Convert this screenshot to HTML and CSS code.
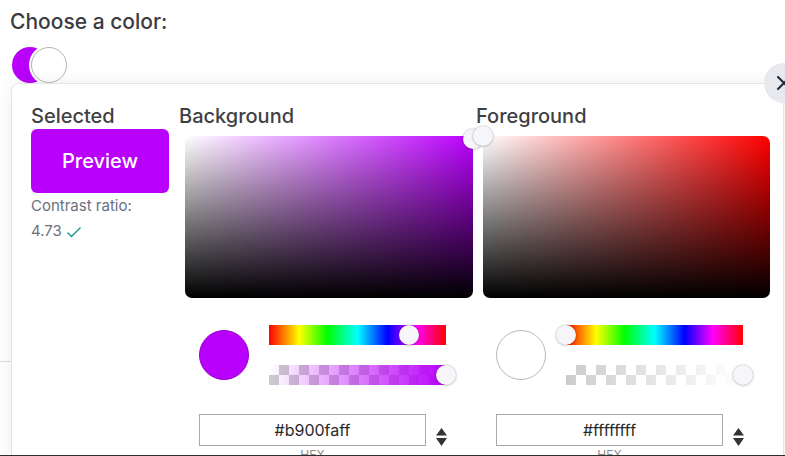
FILE: index.html
```html
<!DOCTYPE html>
<html lang="en">
<head>
<meta charset="utf-8">
<title>Choose a color</title>
<link rel="stylesheet" href="styles.css">
</head>
<body>
<div class="viewport">
  <div class="page">
    <h1 class="title">Choose a color:</h1>
    <div class="swatches">
      <span class="swatch swatch-bg"></span>
      <span class="swatch swatch-fg"></span>
    </div>
    <div class="underlay"></div>
  </div>

  <div class="popover">
    <button class="close" aria-label="Close">
      <svg width="18" height="18" viewBox="0 0 18 18"><path d="M3 3 L15 15 M15 3 L3 15" stroke="#1e293b" stroke-width="2" stroke-linecap="round" fill="none"/></svg>
    </button>
    <div class="cols">
      <div class="col-selected">
        <h2 class="heading">Selected</h2>
        <div class="preview">Preview</div>
        <div class="ratio-label">Contrast ratio:</div>
        <div class="ratio-value">4.73
          <svg class="check" width="16" height="12" viewBox="0 0 16 12"><path d="M1.5 6.5 L5.5 10.5 L14.5 1.5" stroke="#14968c" stroke-width="1.4" fill="none"/></svg>
        </div>
      </div>

      <div class="picker picker-bg">
        <h2 class="heading">Background</h2>
        <div class="sv sv-bg"><span class="handle" style="left:100%;top:2%"></span></div>
        <div class="controls">
          <span class="chip chip-bg"></span>
          <div class="sliders">
            <div class="track hue"><span class="handle" style="left:79%"></span></div>
            <div class="track alpha"><div class="alpha-fill alpha-bg"></div><span class="handle" style="left:100%"></span></div>
          </div>
        </div>
        <div class="hex-row">
          <div class="hex-field">
            <input class="hex" type="text" value="#b900faff">
            <div class="hex-label">HEX</div>
          </div>
          <svg class="arrows" width="11" height="18" viewBox="0 0 11 18"><path d="M5.5 0 L11 7.5 L0 7.5 Z M0 10 L11 10 L5.5 18 Z" fill="#333"/></svg>
        </div>
      </div>

      <div class="picker picker-fg">
        <h2 class="heading">Foreground</h2>
        <div class="sv sv-fg"><span class="handle" style="left:0%;top:0%"></span></div>
        <div class="controls">
          <span class="chip chip-fg"></span>
          <div class="sliders">
            <div class="track hue"><span class="handle" style="left:0%"></span></div>
            <div class="track alpha"><div class="alpha-fill alpha-fg"></div><span class="handle" style="left:100%"></span></div>
          </div>
        </div>
        <div class="hex-row">
          <div class="hex-field">
            <input class="hex" type="text" value="#ffffffff">
            <div class="hex-label">HEX</div>
          </div>
          <svg class="arrows" width="11" height="18" viewBox="0 0 11 18"><path d="M5.5 0 L11 7.5 L0 7.5 Z M0 10 L11 10 L5.5 18 Z" fill="#333"/></svg>
        </div>
      </div>
    </div>
  </div>
</div>
</body>
</html>
```

FILE: styles.css
```css
* { box-sizing: border-box; }

html, body {
  margin: 0;
  padding: 0;
  background: #fff;
  font-family: Inter, "Noto Sans", "Liberation Sans", sans-serif;
}

.viewport {
  position: relative;
  width: 785px;
  height: 456px;
  overflow: hidden;
  border-bottom: 1px solid #2e2e2e;
}

.page {
  padding: 10px 10px 0;
}

.title {
  margin: 0;
  font-size: 21px;
  line-height: 24px;
  font-weight: 500;
  color: #3b3b40;
}

.swatches {
  display: flex;
  margin-top: 13px;
  padding-left: 2px;
  height: 36px;
}

.swatch {
  display: block;
  width: 36px;
  height: 36px;
  border-radius: 50%;
}

.swatch-bg { background: #b900fa; }

.swatch-fg {
  margin-left: -17px;
  background: #fff;
  border: 1px solid #b4b4b4;
  box-shadow: 0 0 0 2px #fff;
}

.underlay {
  height: 279px;
  margin-left: -10px;
  border-bottom: 1px solid #dcdce2;
}

/* Popover */
.popover {
  position: absolute;
  left: 11px;
  top: 83px;
  width: 773px;
  height: 420px;
  background: #fff;
  border: 1px solid #e4e4e9;
  border-radius: 8px;
  box-shadow: 0 0 18px rgba(0, 0, 0, 0.07);
  padding: 20px 0 0 19px;
}

.close {
  position: absolute;
  top: -21px;
  right: -21px;
  width: 40px;
  height: 40px;
  border: 0;
  border-radius: 50%;
  background: #e8e9ee;
  padding: 0;
  display: flex;
  align-items: center;
  justify-content: center;
}

.cols {
  display: flex;
  gap: 10px;
}

.heading {
  margin: 0;
  font-size: 20px;
  line-height: 24px;
  font-weight: 500;
  color: #3f3f46;
}

.col-selected {
  width: 138px;
}

.preview {
  margin-top: 1px;
  height: 64px;
  border-radius: 6px;
  background: #b900fa;
  color: #fff;
  font-size: 20px;
  font-weight: 500;
  display: flex;
  align-items: center;
  justify-content: center;
}

.ratio-label {
  margin-top: 3px;
  font-size: 15px;
  line-height: 20px;
  color: #6b7080;
}

.ratio-value {
  margin-top: 5px;
  font-size: 15px;
  line-height: 20px;
  color: #6b7080;
  display: flex;
  align-items: center;
  gap: 4px;
}

.check { margin-top: 1px; }

/* Picker */
.picker {
  width: 287px;
}

.sv {
  position: relative;
  margin-top: 8px;
  margin-left: 6px;
  width: 288px;
  height: 162px;
  border-radius: 7px;
}

.picker-fg .sv {
  margin-left: 7px;
  width: 287px;
}

.sv-bg {
  background:
    linear-gradient(to top, #000, rgba(0, 0, 0, 0)),
    linear-gradient(to right, #fff, hsl(284, 100%, 50%));
}

.sv-fg {
  background:
    linear-gradient(to top, #000, rgba(0, 0, 0, 0)),
    linear-gradient(to right, #fff, #f00);
}

.handle {
  position: absolute;
  top: 50%;
  width: 20px;
  height: 20px;
  margin: -10px 0 0 -10px;
  border-radius: 50%;
  background: #f6f6fa;
  box-shadow: 0 0 2px rgba(0, 0, 0, 0.3), 0 1px 3px rgba(0, 0, 0, 0.12);
  z-index: 2;
}

.controls {
  display: flex;
  align-items: center;
  margin-top: 27px;
  padding-left: 20px;
  gap: 20px;
}

.chip {
  display: block;
  width: 50px;
  height: 50px;
  border-radius: 50%;
}

.chip-bg {
  background: #b900fa;
  border: 1px solid #9a00cf;
}

.chip-fg {
  background: #fff;
  border: 1px solid #b8b8b8;
}

.sliders {
  display: flex;
  flex-direction: column;
  gap: 20px;
  width: 177px;
}

.track {
  position: relative;
  height: 20px;
}

.hue {
  background: linear-gradient(to right, #f00 0%, #ff0 17%, #0f0 33%, #0ff 50%, #00f 67%, #f0f 83%, #f00 100%);
}

.alpha {
  background-color: #fff;
  background-image:
    linear-gradient(45deg, #cccccc 25%, transparent 25%, transparent 75%, #cccccc 75%),
    linear-gradient(45deg, #cccccc 25%, transparent 25%, transparent 75%, #cccccc 75%);
  background-size: 20px 20px;
  background-position: 0 0, 10px 10px;
}

.alpha-fill {
  position: absolute;
  inset: 0;
}

.alpha-bg { background: linear-gradient(to right, rgba(185, 0, 250, 0), #b900fa); }
.alpha-fg { background: linear-gradient(to right, rgba(255, 255, 255, 0), #fff); }

.hex-row {
  display: flex;
  align-items: flex-start;
  margin-top: 29px;
  padding-left: 20px;
}

.hex-field {
  width: 227px;
}

.hex {
  display: block;
  width: 227px;
  height: 32px;
  border: 1px solid #a9a9a9;
  border-radius: 0;
  padding: 0;
  font-family: Inter, "Noto Sans", "Liberation Sans", sans-serif;
  font-size: 16px;
  color: #2a2a2a;
  text-align: center;
  background: #fff;
  outline: none;
}

.hex-label {
  margin-top: 2px;
  font-size: 12px;
  line-height: 14px;
  color: #8a8a8a;
  text-align: center;
}

.arrows {
  margin: 14px 0 0 10px;
}
```
